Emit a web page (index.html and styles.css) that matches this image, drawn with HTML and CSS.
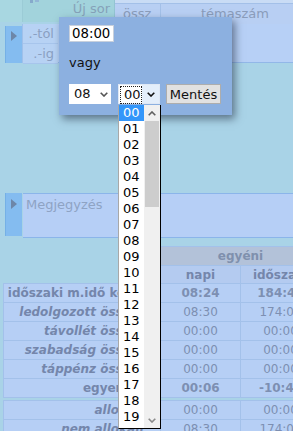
FILE: index.html
```html
<!DOCTYPE html>
<html lang="hu">
<head>
    <meta charset="UTF-8">
    <meta name="viewport" content="width=device-width, initial-scale=1.0">
    <title>Munkaidő</title>
    <link rel="stylesheet" href="styles.css">
</head>
<body>
    <div class="page">
        <div class="toolbar">
            <div class="corner"></div>
            <div class="new-row">
                <svg class="new-ico" width="10" height="4" viewBox="0 0 10 4"><rect x="0" y="0" width="3" height="3" fill="#86aacb"/><rect x="5" y="0" width="4" height="2" fill="#93b6d6"/></svg>
                <span>Új sor</span>
            </div>
            <div class="grid-head">
                <div class="grid-strip"></div>
                <div class="grid-cols">
                    <div class="col-ossz">össz</div>
                    <div class="col-tema">témaszám</div>
                </div>
            </div>
        </div>

        <div class="filter-row">
            <div class="handle"><span class="tri"></span></div>
            <div class="range">
                <div class="range-cell">.-tól</div>
                <div class="range-cell">.-ig</div>
            </div>
            <div class="grid-body"></div>
        </div>

        <div class="note-row">
            <div class="handle"><span class="tri"></span></div>
            <div class="note">Megjegyzés</div>
        </div>

        <table class="sum">
            <colgroup><col class="c-label"><col class="c-num"><col class="c-num"></colgroup>
            <tr class="head"><th class="blank"></th><th colspan="2" class="grp">egyéni</th></tr>
            <tr class="head"><th class="blank"></th><th class="sub">napi</th><th class="sub">időszaki</th></tr>
            <tr class="strong"><th>időszaki m.idő keret</th><td>08:24</td><td>184:48</td></tr>
            <tr><th class="it">ledolgozott összes</th><td>08:30</td><td>174:00</td></tr>
            <tr><th class="it">távollét összes</th><td>00:00</td><td>00:00</td></tr>
            <tr><th class="it">szabadság összes</th><td>00:00</td><td>00:00</td></tr>
            <tr><th class="it">táppénz összes</th><td>00:00</td><td>00:00</td></tr>
            <tr class="strong"><th>egyenleg</th><td>00:06</td><td>-10:48</td></tr>
        </table>
        <table class="sum sum-alloc">
            <colgroup><col class="c-label"><col class="c-num"><col class="c-num"></colgroup>
            <tr><th class="it">allokált</th><td>00:00</td><td>00:00</td></tr>
            <tr><th class="it">nem allokált</th><td>08:30</td><td>174:00</td></tr>
        </table>
    </div>

    <!-- time picker popup -->
    <div class="popup">
        <input class="time-in" type="text" value="08:00">
        <p class="or">vagy</p>
        <div class="pick">
            <div class="sel">
                <span class="sel-val">08</span>
                <span class="chev"><svg width="8" height="5" viewBox="0 0 8 5"><path d="M0.7 0.7 L4 4 L7.3 0.7" fill="none" stroke="#555" stroke-width="1.6"/></svg></span>
            </div>
            <div class="sel sel-focus">
                <span class="sel-val"><span class="focus-ring">00</span></span>
                <span class="chev"><svg width="8" height="5" viewBox="0 0 8 5"><path d="M0.7 0.7 L4 4 L7.3 0.7" fill="none" stroke="#111" stroke-width="1.6"/></svg></span>
            </div>
            <button class="save" type="button">Mentés</button>
        </div>
    </div>

    <!-- open minute list -->
    <div class="droplist">
        <ul class="opts">
            <li class="on">00</li><li>01</li><li>02</li><li>03</li><li>04</li>
            <li>05</li><li>06</li><li>07</li><li>08</li><li>09</li>
            <li>10</li><li>11</li><li>12</li><li>13</li><li>14</li>
            <li>15</li><li>16</li><li>17</li><li>18</li><li>19</li>
        </ul>
        <div class="sb">
            <div class="sb-btn"><svg width="8" height="5" viewBox="0 0 8 5"><path d="M0.7 4.3 L4 1 L7.3 4.3" fill="none" stroke="#606060" stroke-width="1.6"/></svg></div>
            <div class="sb-thumb"></div>
            <div class="sb-track"></div>
            <div class="sb-btn"><svg width="8" height="5" viewBox="0 0 8 5"><path d="M0.7 0.7 L4 4 L7.3 0.7" fill="none" stroke="#8a8a8a" stroke-width="1.6"/></svg></div>
        </div>
    </div>
</body>
</html>
```

FILE: styles.css
```css
html, body {
    margin: 0;
    height: 100%;
    overflow: hidden;
}

body {
    background: #a9d3e7;
    font-family: "DejaVu Sans", Verdana, sans-serif;
    font-size: 12px;
    color: #7d8fb2;
}

.page {
    width: 293px;
}

/* top toolbar + grid header */
.toolbar {
    display: flex;
    height: 24px;
}

.corner {
    width: 23px;
    height: 22px;
    background: #a8d7e1;
    border-right: 1px solid #9bcbd6;
    box-sizing: border-box;
}

.new-row {
    width: 92px;
    height: 22px;
    background: #a2d3dc;
    border-right: 1px solid #93c4d2;
    box-sizing: border-box;
    display: flex;
    align-items: flex-start;
    justify-content: space-between;
    padding: 0 4px 0 7px;
    font-size: 13px;
    color: #86a2b9;
    line-height: 17px;
}

.new-ico {
    display: block;
}

.grid-head {
    flex: 1;
    overflow: hidden;
}

.grid-strip {
    height: 3px;
    background: #c9dcf5;
    border-bottom: 1px solid #a3c0e8;
}

.grid-cols {
    display: flex;
    height: 20px;
    background: #b8cff3;
    border-bottom: 1px solid #9bbbe8;
    line-height: 20px;
    font-size: 13px;
    color: #8a9cba;
}

.col-ossz {
    width: 46px;
    flex: none;
    padding-left: 8px;
    box-sizing: border-box;
    border-right: 1px solid #a3c0e8;
}

.col-tema {
    width: 148px;
    flex: none;
    text-align: center;
}

/* filter rows */
.filter-row {
    display: flex;
    height: 39px;
}

.handle {
    width: 17px;
    margin-left: 5px;
    margin-top: 2px;
    background: #84bcf0;
    border-left: 1px solid #75b0e6;
    box-sizing: border-box;
    padding: 5px 0 0 5px;
}

.tri {
    display: block;
    width: 0;
    height: 0;
    border-top: 5px solid transparent;
    border-bottom: 5px solid transparent;
    border-left: 6px solid #6d86a8;
}

.range {
    width: 36px;
    border-left: 1px solid #9fc0ea;
    box-sizing: border-box;
}

.range-cell {
    height: 19px;
    background: #b7d2f4;
    border-bottom: 1px solid #a7c5ec;
    text-align: right;
    padding-right: 4px;
    line-height: 19px;
    font-size: 13px;
    color: #8aa0c2;
}

.grid-body {
    flex: 1;
    background: #b7d0f6;
    border-bottom: 1px solid #92b7e8;
}

/* note row */
.note-row {
    display: flex;
    height: 45px;
    margin-top: 130px;
}

.note-row .handle {
    margin-top: 0;
    height: 43px;
    padding-top: 6px;
}

.note {
    flex: 1;
    margin-left: 1px;
    background: #b6cff6;
    border-top: 1px solid #8bb5ea;
    border-bottom: 1px solid #8bb5ea;
    padding: 3px 0 0 3px;
    font-size: 13px;
    color: #8ea3c4;
}

/* summary table */
.sum {
    border-collapse: collapse;
    table-layout: fixed;
    width: 318px;
    margin: 8px 0 0 3px;
}

.sum-alloc {
    margin-top: 2px;
}

.c-label { width: 157px; }
.c-num { width: 80px; }

.sum th,
.sum td {
    height: 18px;
    padding: 0 3px;
    border: 1px solid #a3c1ea;
    background: #b6cff5;
    white-space: nowrap;
    overflow: hidden;
    text-align: center;
    font-weight: normal;
}

.sum th {
    text-align: right;
    padding-right: 15px;
    font-weight: bold;
    color: #7486ab;
}

.sum th.it {
    font-style: italic;
}

.sum .head th {
    height: 17px;
    padding-right: 3px;
    text-align: center;
}

.sum th.blank {
    background: transparent;
    border: none;
}

.sum th.grp {
    height: 18px;
    background: #b3c2d9;
    color: #7f90ad;
}

.sum th.sub {
    background: #b4cbf0;
}

.sum .strong td {
    font-weight: bold;
}

/* popup */
.popup {
    position: absolute;
    left: 59px;
    top: 17px;
    width: 173px;
    height: 98px;
    box-sizing: border-box;
    padding: 8px 10px;
    background: #8cb0e0;
    box-shadow: 3px 4px 8px rgba(30, 40, 60, 0.55);
    color: #111;
    font-size: 13px;
}

.time-in {
    display: block;
    width: 45px;
    height: 17px;
    box-sizing: border-box;
    margin: 0;
    padding: 0 0 0 2px;
    border: 1px solid #c8d0dc;
    background: #fff;
    font-family: "DejaVu Sans", Verdana, sans-serif;
    font-size: 13.3px;
    color: #000;
}

.or {
    margin: 13px 0 0;
    line-height: 16px;
}

.pick {
    display: flex;
    margin-top: 13px;
    height: 20px;
}

.sel {
    display: flex;
    width: 42px;
    height: 20px;
    background: #fff;
    box-sizing: border-box;
    margin-right: 7px;
}

.sel-val {
    flex: 1;
    padding-left: 5px;
    line-height: 20px;
}

.chev {
    width: 15px;
    display: flex;
    align-items: center;
    justify-content: center;
}

.sel-focus {
    margin-right: 6px;
    border: 1px solid #dfe8f5;
}

.sel-focus .sel-val {
    padding: 1px 0 0 1px;
    line-height: 16px;
}

.focus-ring {
    display: block;
    height: 16px;
    padding-left: 3px;
    border: 1px dotted #222;
}

.sel-focus .chev {
    width: 17px;
    background: #e3eefb;
}

.save {
    width: 55px;
    height: 20px;
    padding: 0;
    background: #e1e1e1;
    border: 1px solid #adadad;
    font-family: "DejaVu Sans", Verdana, sans-serif;
    font-size: 13px;
    color: #111;
}

/* dropdown list */
.droplist {
    position: absolute;
    left: 118px;
    top: 105px;
    width: 43px;
    height: 324px;
    box-sizing: border-box;
    display: flex;
    background: #fff;
    border-left: 1px solid #a8a8a8;
    border-right: 1px solid #000;
    border-bottom: 1px solid #000;
}

.opts {
    list-style: none;
    margin: 0;
    padding: 0;
    flex: 1;
}

.opts li {
    height: 16px;
    line-height: 16px;
    padding-left: 4px;
    font-size: 13px;
    color: #000;
}

.opts li.on {
    background: #3396fa;
    color: #fff;
}

.sb {
    width: 16px;
    display: flex;
    flex-direction: column;
    background: #f0f0f0;
}

.sb-btn {
    height: 16px;
    display: flex;
    align-items: center;
    justify-content: center;
}

.sb-thumb {
    height: 86px;
    margin: 0 1px;
    background: #cdcdcd;
}

.sb-track {
    flex: 1;
}
```
